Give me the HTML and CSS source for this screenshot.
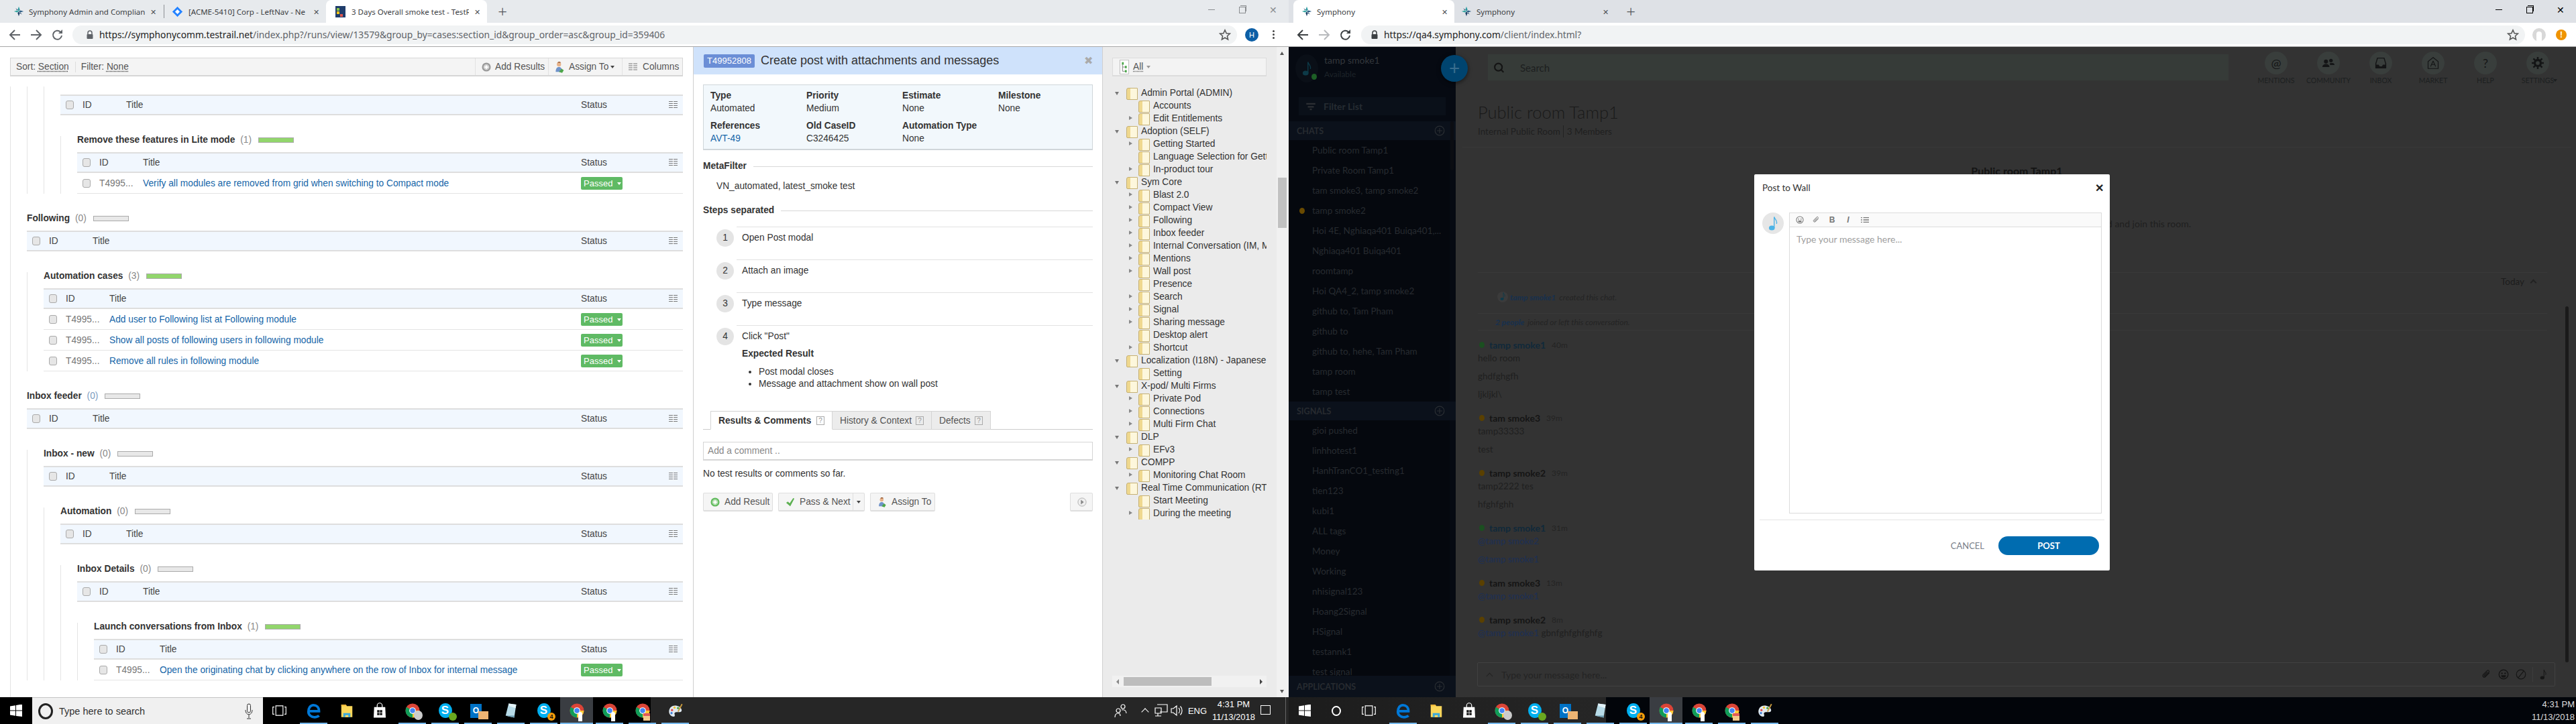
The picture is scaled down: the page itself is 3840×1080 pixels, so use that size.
FILE: index.html
```html
<!DOCTYPE html>
<html lang="en">
<head>
<meta charset="utf-8">
<title>Two browser windows</title>
<link rel="stylesheet" href="styles.css">
</head>
<body>
<svg class="defs" aria-hidden="true">
  <symbol id="logo" viewBox="0 0 20 20"><path d="M10 1l2 6-2 3-2-3z" fill="#2a9aa0"/><path d="M19 10l-6 2-3-2 3-2z" fill="#2d5f86"/><path d="M10 19l-2-6 2-3 2 3z" fill="#1c3f66"/><path d="M1 10l6-2 3 2-3 2z" fill="#34a5a0"/><path d="M4 4l4 3-1 1zM16 16l-4-3 1-1z" fill="#1c3f66"/></symbol>
  <symbol id="back" viewBox="0 0 20 20"><path d="M10 3l-7 7 7 7M3 10h15" fill="none" stroke="currentColor" stroke-width="2"/></symbol>
  <symbol id="fwd" viewBox="0 0 20 20"><path d="M10 3l7 7-7 7M17 10H2" fill="none" stroke="currentColor" stroke-width="2"/></symbol>
  <symbol id="reload" viewBox="0 0 20 20"><path d="M16 11a6.5 6.5 0 1 1-2-5.5" fill="none" stroke="currentColor" stroke-width="2"/><path d="M17 2v6h-6z" fill="currentColor"/></symbol>
  <symbol id="lock" viewBox="0 0 12 14"><path d="M3 6V4a3 3 0 0 1 6 0v2" fill="none" stroke="currentColor" stroke-width="1.5"/><rect x="1.5" y="6" width="9" height="7" rx="1" fill="currentColor"/></symbol>
  <symbol id="star" viewBox="0 0 20 20"><path d="M10 2l2.4 5.4 5.8.6-4.4 3.9 1.3 5.8L10 14.700l-5.100 3 1.300-5.800L1.800 8l5.800-.6z" fill="none" stroke="#555" stroke-width="1.700"/></symbol>
  <symbol id="cols" viewBox="0 0 13 11"><path d="M0 .5h6M7 .5h6M0 3.500h6M7 3.500h6M0 6.500h6M7 6.500h6M0 9.500h6M7 9.500h6" stroke="#777" stroke-width="1" fill="none"/><path d="M6.500 0v11" stroke="#fff"/></symbol>
  <symbol id="user" viewBox="0 0 20 22"><circle cx="9" cy="6" r="4" fill="#e8b48c"/><path d="M6 3a4 4 0 0 1 7 0z" fill="#8a4a20"/><path d="M3 20c0-7 3-9 6-9s6 2 6 9z" fill="#6f93c9"/><path d="M9 20l5-6 4 3-3 5z" fill="#4da64a"/></symbol>
  <symbol id="plusc" viewBox="0 0 16 16"><circle cx="8" cy="8" r="7.500" fill="currentColor"/><circle cx="8" cy="8" r="5" fill="#fff" fill-opacity=".55"/><path d="M8 5v6M5 8h6" stroke="#fff" stroke-width="2"/></symbol>
  <symbol id="chrome" viewBox="0 0 32 32"><circle cx="16" cy="16" r="14" fill="#db4437"/><path d="M16 16L3.900 9A14 14 0 0 0 16 30z" fill="#0f9d58"/><path d="M16 16h14a14 14 0 0 1-14 14z" fill="#fcc934"/><circle cx="16" cy="16" r="6.500" fill="#fff"/><circle cx="16" cy="16" r="5" fill="#4285f4"/></symbol>
  <symbol id="edge" viewBox="0 0 32 32"><path d="M7 17h19c0-8-5-12-11-12C9 5 5 11 5 18c0 7 6 11 12 11 4 0 7-1 9-3" fill="none" stroke="#0078d7" stroke-width="5"/></symbol>
  <symbol id="files" viewBox="0 0 32 32"><path d="M5 4h9l2 3h11v22H5z" fill="#fbd75b"/><path d="M5 4h9l2 3H5z" fill="#f0b93a"/><rect x="9" y="21" width="14" height="8" fill="#39a9dc"/><rect x="13" y="25" width="6" height="4" fill="#fbd75b"/></symbol>
  <symbol id="store" viewBox="0 0 32 32"><path d="M5 9h22l1 21H4z" fill="#fff"/><path d="M11 10V6a5 5 0 0 1 10 0v4" fill="none" stroke="#fff" stroke-width="1.600"/><path d="M11 15h4.500v4.500H11zM16.500 15H21v4.500h-4.500zM11 20.500h4.500V25H11zM16.500 20.500H21V25h-4.500z" fill="#111"/></symbol>
  <symbol id="notes" viewBox="0 0 32 32"><path d="M11 2l15 2-4 26L5 26z" fill="#b7dbe8"/><path d="M11 2l15 2-1 7-13-4z" fill="#e3f2f7"/><path d="M5 26l17 4 1-4z" fill="#6d9cb0"/></symbol>
  <symbol id="palette" viewBox="0 0 32 32"><path d="M15 6C7 6 3 12 3 18s5 10 9 10c3 0 3-3 2-5s1-4 4-4h6c3 0 5-2 4-5-1-5-7-8-13-8z" fill="#dfe8ef"/><circle cx="9" cy="15" r="2.200" fill="#e04b4b"/><circle cx="14" cy="10" r="2.200" fill="#f2c230"/><circle cx="21" cy="11" r="2.200" fill="#4fa64a"/><circle cx="8" cy="21" r="2.200" fill="#3d7ed8"/><path d="M21 18L29 3" stroke="#c79a3f" stroke-width="2.500"/></symbol>
  <symbol id="win" viewBox="0 0 18 18"><path d="M0 2.500L8 1.200V8.500H0zM9 1l9-1.500V8.500H9zM0 9.500h8v7.300L0 15.500zM9 9.500h9V18L9 17z" fill="#fff"/></symbol>
  <symbol id="tview" viewBox="0 0 22 18"><path d="M5 1h12v16H5zM2.500 3H0v12h2.500M19.500 3H22v12h-2.500" fill="none" stroke="#fff" stroke-width="1.300"/></symbol>
  <symbol id="people" viewBox="0 0 20 22"><circle cx="13" cy="5" r="3" fill="none" stroke="#fff" stroke-width="1.200"/><circle cx="6" cy="11" r="3" fill="none" stroke="#fff" stroke-width="1.200"/><path d="M1 21c0-4 2-6 5-6s3 2 3 4M11 10c4-1 7 1 7 5" fill="none" stroke="#fff" stroke-width="1.200"/></symbol>
  <symbol id="net" viewBox="0 0 20 20"><path d="M4 1h15v11H8M1 6h9v8H1zM5 14v4M1 18h9" fill="none" stroke="#fff" stroke-width="1.200"/></symbol>
  <symbol id="sound" viewBox="0 0 20 20"><path d="M2 7h3l5-4v14l-5-4H2zM13 6a6 6 0 0 1 0 8M15.500 3.500a9.500 9.500 0 0 1 0 13" fill="none" stroke="#fff" stroke-width="1.200"/></symbol>
  <symbol id="note" viewBox="0 0 16 26"><ellipse cx="6" cy="21" rx="5" ry="4" fill="currentColor"/><path d="M10 21V2c1 5 6 6 4 12" fill="none" stroke="currentColor" stroke-width="1.600"/></symbol>
  <symbol id="clip" viewBox="0 0 20 20"><path d="M16 7l-8 8a3 3 0 0 1-4-4l8-8a2 2 0 0 1 3 3l-7 7a1 1 0 0 1-1.500-1.500l6-6" fill="none" stroke="currentColor" stroke-width="1.500"/></symbol>
  <symbol id="smile" viewBox="0 0 20 20"><circle cx="10" cy="10" r="8.500" fill="none" stroke="currentColor" stroke-width="1.700"/><circle cx="7" cy="8" r="1.500" fill="currentColor"/><circle cx="13" cy="8" r="1.500" fill="currentColor"/><path d="M5.500 11.500h9a4.500 4.500 0 0 1-9 0z" fill="currentColor"/></symbol>
  <symbol id="listi" viewBox="0 0 20 16"><path d="M6 2.500h14M6 8h14M6 13.500h14M0 2.500h3M0 8h3M0 13.500h3" stroke="currentColor" stroke-width="2.200" fill="none"/></symbol>
  <symbol id="filter" viewBox="0 0 20 16"><path d="M1 1h18v3H1zM4 7h12v3H4zM8 12h4v3H8z" fill="currentColor"/></symbol>
  <symbol id="search" viewBox="0 0 20 20"><circle cx="9" cy="9" r="6.500" fill="none" stroke="currentColor" stroke-width="2.500"/><path d="M13 13l5 5" stroke="currentColor" stroke-width="2.500"/></symbol>
  <symbol id="cplus" viewBox="0 0 20 20"><circle cx="10" cy="10" r="8.500" fill="none" stroke="currentColor" stroke-width="1.500"/><path d="M10 5v10M5 10h10" stroke="currentColor" stroke-width="1.500"/></symbol>
  <symbol id="community" viewBox="0 0 24 20"><circle cx="7" cy="7" r="4" fill="currentColor"/><circle cx="17" cy="5" r="3.500" fill="currentColor"/><path d="M0 18c0-4 3-6 7-6s7 2 7 6zM15 10h5c2 0 4 1 4 4h-9z" fill="currentColor"/></symbol>
  <symbol id="inbox" viewBox="0 0 20 22"><path d="M4 2h12l3 10v8H1v-8z" fill="none" stroke="currentColor" stroke-width="1.800"/><path d="M1 14h5l2 3h4l2-3h5v6H1z" fill="currentColor"/></symbol>
  <symbol id="market" viewBox="0 0 22 24"><path d="M11 1l10 8v14H1V9z" fill="none" stroke="currentColor" stroke-width="1.600"/><path d="M11 8l-5 11M11 8l5 11M8 15h6" stroke="currentColor" stroke-width="1.500" fill="none"/></symbol>
  <symbol id="gear" viewBox="0 0 22 22"><circle cx="11" cy="11" r="5.500" fill="none" stroke="currentColor" stroke-width="4"/><path d="M11 0v5M11 17v5M0 11h5M17 11h5M3 3l4 4M15 15l4 4M19 3l-4 4M3 19l4-4" stroke="currentColor" stroke-width="3"/></symbol>
  <symbol id="nope" viewBox="0 0 20 20"><circle cx="10" cy="10" r="8.500" fill="none" stroke="currentColor" stroke-width="1.500"/><path d="M5 16L15 4" stroke="currentColor" stroke-width="1.500"/></symbol>
  <symbol id="tree" viewBox="0 0 16 24"><rect x=".5" y=".5" width="15" height="23" fill="#fff" stroke="#aaa"/><path d="M4 4h3v4H4zM9 10h3v4H9zM9 17h3v4H9z" fill="#4ba84a"/><path d="M5 8v11h4M5 12h4" stroke="#777" fill="none"/></symbol>
</svg>

<div class="screen">

<!-- LEFT WINDOW -->
<section class="win win-l">
  <div class="browser">
    <div class="tabstrip strip-l">
      <div class="tab"><svg class="favicon"><use href="#logo"/></svg><span class="tab-text">Symphony Admin and Complianc</span><span class="tab-x">✕</span></div>
      <div class="tab tab-sep"><span class="diamond"></span><span class="tab-text">[ACME-5410] Corp - LeftNav - Ne</span><span class="tab-x">✕</span></div>
      <div class="tab tab-on tab-third"><span class="tr-icon"><i></i><i></i><i></i></span><span class="tab-text">3 Days Overall smoke test - TestR</span><span class="tab-x">✕</span></div>
      <span class="newtab">+</span>
      <div class="winctl winctl-dim"><span class="ctl-min"></span><span class="ctl-max"></span><span class="ctl-close">✕</span></div>
    </div>
    <div class="toolbar">
      <svg class="nav-ic ink"><use href="#back"/></svg>
      <svg class="nav-ic ink"><use href="#fwd"/></svg>
      <svg class="nav-ic ink"><use href="#reload"/></svg>
      <div class="omni omni-l"><svg class="lock"><use href="#lock"/></svg><span class="url"><b>https://symphonycomm.testrail.net</b>/index.php?/runs/view/13579&amp;group_by=cases:section_id&amp;group_order=asc&amp;group_id=359406</span><svg class="star"><use href="#star"/></svg></div>
      <span class="slot-avatar"><span class="avatar-h">H</span></span>
      <span class="slot-menu"><span class="dots"><i></i><i></i><i></i></span></span>
    </div>
    <div class="tr-page">
      <!-- runs column -->
      <div class="runs">
        <div class="sortbar">
          <span class="sb-cell">Sort: <u>Section</u></span>
          <span class="sb-cell sb-line">Filter: <u>None</u></span>
          <span class="sb-btn sb-first"><svg class="sb-ic grayc"><use href="#plusc"/></svg>Add Results</span>
          <span class="sb-btn sb-assign"><svg class="sb-ic2"><use href="#user"/></svg>Assign To <i class="caret"></i></span>
          <span class="sb-btn sb-cols"><svg class="sb-ic3"><use href="#cols"/></svg>Columns</span>
        </div>
        <div class="grp grp-root">
          <div class="grp">
            <div class="grp grp-inner">
              <div class="thead"><span class="chk"></span><span>ID</span><span>Title</span><span>Status</span><svg class="colic"><use href="#cols"/></svg></div>
              <div class="grp grp-gap">
                <h3 class="sec">Remove these features in Lite mode <em>(1)</em><span class="bar bar-g"></span></h3>
                <div class="thead"><span class="chk"></span><span>ID</span><span>Title</span><span>Status</span><svg class="colic"><use href="#cols"/></svg></div>
                <div class="trow"><span class="chk"></span><span class="tid">T4995...</span><a class="tlink">Verify all modules are removed from grid when switching to Compact mode</a><span class="passed">Passed <i class="caret caret-w"></i></span></div>
              </div>
            </div>
          </div>
          <h3 class="sec sec-gap">Following <em>(0)</em><span class="bar"></span></h3>
          <div class="thead"><span class="chk"></span><span>ID</span><span>Title</span><span>Status</span><svg class="colic"><use href="#cols"/></svg></div>
          <div class="grp grp-gap">
            <h3 class="sec">Automation cases <em>(3)</em><span class="bar bar-g"></span></h3>
            <div class="thead"><span class="chk"></span><span>ID</span><span>Title</span><span>Status</span><svg class="colic"><use href="#cols"/></svg></div>
            <div class="trow"><span class="chk"></span><span class="tid">T4995...</span><a class="tlink">Add user to Following list at Following module</a><span class="passed">Passed <i class="caret caret-w"></i></span></div>
            <div class="trow"><span class="chk"></span><span class="tid">T4995...</span><a class="tlink">Show all posts of following users in following module</a><span class="passed">Passed <i class="caret caret-w"></i></span></div>
            <div class="trow"><span class="chk"></span><span class="tid">T4995...</span><a class="tlink">Remove all rules in following module</a><span class="passed">Passed <i class="caret caret-w"></i></span></div>
          </div>
          <h3 class="sec sec-gap">Inbox feeder <em class="blue">(0)</em><span class="bar"></span></h3>
          <div class="thead"><span class="chk"></span><span>ID</span><span>Title</span><span>Status</span><svg class="colic"><use href="#cols"/></svg></div>
          <div class="grp grp-gap">
            <h3 class="sec">Inbox - new <em>(0)</em><span class="bar"></span></h3>
            <div class="thead"><span class="chk"></span><span>ID</span><span>Title</span><span>Status</span><svg class="colic"><use href="#cols"/></svg></div>
            <div class="grp grp-gap">
              <h3 class="sec">Automation <em>(0)</em><span class="bar"></span></h3>
              <div class="thead"><span class="chk"></span><span>ID</span><span>Title</span><span>Status</span><svg class="colic"><use href="#cols"/></svg></div>
              <div class="grp grp-gap">
                <h3 class="sec">Inbox Details <em>(0)</em><span class="bar"></span></h3>
                <div class="thead"><span class="chk"></span><span>ID</span><span>Title</span><span>Status</span><svg class="colic"><use href="#cols"/></svg></div>
                <div class="grp grp-gap">
                  <h3 class="sec">Launch conversations from Inbox <em>(1)</em><span class="bar bar-g"></span></h3>
                  <div class="thead"><span class="chk"></span><span>ID</span><span>Title</span><span>Status</span><svg class="colic"><use href="#cols"/></svg></div>
                  <div class="trow"><span class="chk"></span><span class="tid">T4995...</span><a class="tlink">Open the originating chat by clicking anywhere on the row of Inbox for internal message</a><span class="passed">Passed <i class="caret caret-w"></i></span></div>
                </div>
              </div>
            </div>
          </div>
        </div>
      </div>

      <!-- case panel -->
      <div class="case">
        <div class="case-head"><span class="badge">T49952808</span><span class="case-title">Create post with attachments and messages</span><span class="case-x">✖</span></div>
        <div class="case-body">
          <div class="info">
            <div><b>Type</b><span>Automated</span></div>
            <div><b>Priority</b><span>Medium</span></div>
            <div><b>Estimate</b><span>None</span></div>
            <div><b>Milestone</b><span>None</span></div>
            <div><b>References</b><a class="tlink">AVT-49</a></div>
            <div><b>Old CaseID</b><span>C3246425</span></div>
            <div><b>Automation Type</b><span>None</span></div>
          </div>
          <h4 class="rule rule-meta">MetaFilter</h4>
          <p class="meta-val">VN_automated, latest_smoke test</p>
          <h4 class="rule rule-steps">Steps separated</h4>
          <div class="step"><span class="num">1</span><div class="step-b">Open Post modal</div></div>
          <div class="step"><span class="num">2</span><div class="step-b">Attach an image</div></div>
          <div class="step"><span class="num">3</span><div class="step-b">Type message</div></div>
          <div class="step"><span class="num">4</span><div class="step-b">Click "Post"<strong class="exp">Expected Result</strong>
            <ul class="bullets"><li>Post modal closes</li><li>Message and attachment show on wall post</li></ul></div></div>
          <div class="ctabs">
            <span class="ctab ctab-on ctab-a">Results &amp; Comments <i class="q">?</i></span>
            <span class="ctab ctab-b">History &amp; Context <i class="q">?</i></span>
            <span class="ctab ctab-c">Defects <i class="q">?</i></span>
          </div>
          <div class="comment">Add a comment ..</div>
          <p class="nores">No test results or comments so far.</p>
          <div class="actions">
            <span class="btn btn-add"><svg class="btn-ic greenc"><use href="#plusc"/></svg>Add Result</span>
            <span class="btn btn-pass"><svg class="btn-ic" viewBox="0 0 16 16"><path d="M1 9l3-2 3 3 6-9 2 1-7 13z" fill="#5cb050"/></svg>Pass &amp; Next<i class="btn-split"><i class="caret"></i></i></span>
            <span class="btn btn-assign"><svg class="btn-ic"><use href="#user"/></svg>Assign To</span>
            <span class="btn btn-next"><svg class="btn-ic grayc" viewBox="0 0 16 16"><circle cx="8" cy="8" r="7" fill="#eee" stroke="#aaa"/><path d="M6 4l5 4-5 4z" fill="#888"/></svg></span>
          </div>
        </div>
      </div>

      <!-- tree column -->
      <div class="side">
        <div class="all"><svg class="all-ic"><use href="#tree"/></svg><u>All</u><i class="caret caret-g"></i></div>
        <ul class="tree">
          <li class="p o">Admin Portal (ADMIN)</li>
          <li class="c">Accounts</li>
          <li class="c a">Edit Entitlements</li>
          <li class="p o">Adoption (SELF)</li>
          <li class="c a">Getting Started</li>
          <li class="c">Language Selection for Getting Started</li>
          <li class="c a">In-product tour</li>
          <li class="p o">Sym Core</li>
          <li class="c a">Blast 2.0</li>
          <li class="c a">Compact View</li>
          <li class="c a">Following</li>
          <li class="c a">Inbox feeder</li>
          <li class="c a">Internal Conversation (IM, MIM)</li>
          <li class="c a">Mentions</li>
          <li class="c a">Wall post</li>
          <li class="c">Presence</li>
          <li class="c a">Search</li>
          <li class="c a">Signal</li>
          <li class="c a">Sharing message</li>
          <li class="c">Desktop alert</li>
          <li class="c a">Shortcut</li>
          <li class="p o">Localization (I18N) - Japanese</li>
          <li class="c">Setting</li>
          <li class="p o">X-pod/ Multi Firms</li>
          <li class="c a">Private Pod</li>
          <li class="c a">Connections</li>
          <li class="c a">Multi Firm Chat</li>
          <li class="p o">DLP</li>
          <li class="c a">EFv3</li>
          <li class="p o">COMPP</li>
          <li class="c a">Monitoring Chat Room</li>
          <li class="p o">Real Time Communication (RTC)</li>
          <li class="c">Start Meeting</li>
          <li class="c a">During the meeting</li>
        </ul>
        <div class="hscroll"><i class="h-l"></i><i class="h-thumb"></i><i class="h-r"></i></div>
      </div>
      <div class="vscroll"><i class="v-up"></i><i class="v-thumb"></i><i class="v-down"></i></div>
    </div>
  </div>
  <footer class="taskbar task-l">
    <span class="tb-start"><svg class="tb-win"><use href="#win"/></svg></span>
    <div class="tb-search"><span class="cortana"></span><span class="tb-stext">Type here to search</span><svg class="tb-mic" viewBox="0 0 12 24"><rect x="3.500" y="1" width="5" height="13" rx="2.500" fill="none" stroke="#333"/><path d="M1 10c0 9 10 9 10 0M6 17v5M3 23h6" fill="none" stroke="#333"/></svg></div>
    <span class="tb-view"><svg class="tb-tv"><use href="#tview"/></svg></span>
    <span class="gap3"></span>
    <span class="app run"><svg class="ai"><use href="#edge"/></svg></span>
    <span class="app"><svg class="ai"><use href="#files"/></svg></span>
    <span class="app"><svg class="ai"><use href="#store"/></svg></span>
    <span class="app run"><svg class="ai"><use href="#chrome"/></svg><i class="b-user"></i></span>
    <span class="app run"><span class="skype">S</span><i class="b-green"></i></span>
    <span class="app run"><span class="outlook">O</span><i class="b-mail"></i></span>
    <span class="app run"><svg class="ai"><use href="#notes"/></svg></span>
    <span class="app run"><span class="skype">S</span><i class="b-orange">4</i></span>
    <span class="app run app-on"><svg class="ai"><use href="#chrome"/></svg><i class="b-fig"></i></span>
    <span class="app run"><svg class="ai"><use href="#chrome"/></svg><i class="b-fig"></i></span>
    <span class="app run"><svg class="ai"><use href="#chrome"/></svg><i class="b-cake"></i></span>
    <span class="app run"><svg class="ai"><use href="#palette"/></svg></span>
    <div class="tray">
      <svg class="tr tr-people"><use href="#people"/></svg>
      <span class="tr-chev"></span>
      <svg class="tr"><use href="#net"/></svg>
      <svg class="tr tr-sound"><use href="#sound"/></svg>
      <span class="tr-eng">ENG</span>
      <span class="clock"><span>4:31 PM</span><span>11/13/2018</span></span>
      <span class="notif"></span>
      <span class="showdesk"></span>
    </div>
  </footer>
</section>

<!-- RIGHT WINDOW -->
<section class="win win-r">
  <div class="browser">
    <div class="tabstrip strip-r">
      <div class="tab tab-on tab-sym"><svg class="favicon"><use href="#logo"/></svg><span class="tab-text">Symphony</span><span class="tab-x">✕</span></div>
      <div class="tab tab-sym tab-sym2"><svg class="favicon"><use href="#logo"/></svg><span class="tab-text">Symphony</span><span class="tab-x">✕</span></div>
      <span class="newtab">+</span>
      <div class="winctl"><span class="ctl-min"></span><span class="ctl-max"></span><span class="ctl-close">✕</span></div>
    </div>
    <div class="toolbar toolbar-r">
      <svg class="nav-ic ink"><use href="#back"/></svg>
      <svg class="nav-ic nav-off"><use href="#fwd"/></svg>
      <svg class="nav-ic ink"><use href="#reload"/></svg>
      <div class="omni omni-r"><svg class="lock"><use href="#lock"/></svg><span class="url"><b>https://qa4.symphony.com</b>/client/index.html?</span><svg class="star"><use href="#star"/></svg></div>
      <span class="slot-avatar slot-a2"><span class="avatar-o"><i></i></span></span>
      <span class="slot-menu slot-m2"><span class="warn">!</span></span>
    </div>
    <div class="sym">
      <aside class="snav">
        <div class="profile">
          <span class="p-av"><svg class="p-note"><use href="#note"/></svg><i class="p-dot"></i></span>
          <div class="p-txt"><strong>tamp smoke1</strong><span>Available</span></div>
        </div>
        <div class="filter"><svg class="f-ic"><use href="#filter"/></svg>Filter List</div>
        <div class="shead">CHATS<svg class="s-plus"><use href="#cplus"/></svg></div>
        <ul class="slist">
          <li>Public room Tamp1</li>
          <li>Private Room Tamp1</li>
          <li>tam smoke3, tamp smoke2</li>
          <li class="away">tamp smoke2</li>
          <li>Hoi 4E, Nghiaqa401 Buiqa401,...</li>
          <li>Nghiaqa401 Buiqa401</li>
          <li>roomtamp</li>
          <li>Hoi QA4_2, tamp smoke2</li>
          <li>github to, Tam Pham</li>
          <li>github to</li>
          <li>github to, hehe, Tam Pham</li>
          <li>tamp room</li>
          <li>tamp test</li>
        </ul>
        <div class="shead">SIGNALS<svg class="s-plus"><use href="#cplus"/></svg></div>
        <ul class="slist slist-grow">
          <li>gioi pushed</li>
          <li>linhhotest1</li>
          <li>HanhTranCO1_testing1</li>
          <li>tien123</li>
          <li>kubi1</li>
          <li>ALL tags</li>
          <li>Money</li>
          <li>Working</li>
          <li>nhisignal123</li>
          <li>Hoang2Signal</li>
          <li>HSignal</li>
          <li>testannk1</li>
          <li>test signal</li>
        </ul>
        <div class="shead shead-app">APPLICATIONS<svg class="s-plus"><use href="#cplus"/></svg></div>
      </aside>
      <main class="smain">
        <div class="stop">
          <div class="ssearch"><svg class="ss-ic"><use href="#search"/></svg>Search</div>
          <div class="snavs">
            <div class="sn"><span class="sn-c sn-at">@</span>MENTIONS</div>
            <div class="sn"><span class="sn-c"><svg class="sn-i"><use href="#community"/></svg></span>COMMUNITY</div>
            <div class="sn"><span class="sn-c"><svg class="sn-i"><use href="#inbox"/></svg></span>INBOX</div>
            <div class="sn"><span class="sn-c"><svg class="sn-i"><use href="#market"/></svg></span>MARKET</div>
            <div class="sn"><span class="sn-c sn-at">?</span>HELP</div>
            <div class="sn sn-set"><span class="sn-c"><svg class="sn-i"><use href="#gear"/></svg></span>SETTINGS</div>
          </div>
        </div>
        <header class="rhead">
          <h1>Public room Tamp1</h1>
          <p>Internal Public Room <i></i> 3 Members</p>
        </header>
        <div class="rabout">
          <h2>Public room Tamp1</h2>
          <p>find and join this room.</p>
        </div>
        <div class="tline">
          <div class="tl-a">
            <span class="tl-today">Today <i></i></span>
            <div class="tl-created"><span class="tl-av"><svg class="tl-note"><use href="#note"/></svg></span><em class="who">tamp smoke1</em><em>created this chat.</em></div>
          </div>
          <div class="tl-b"><em class="who">2 people</em><em>joined or left this conversation.</em></div>
          <article class="msg msg-first"><div class="mh"><i class="dot on"></i><b class="me">tamp smoke1</b><time>40m</time></div><p>hello room</p><p class="m2">ghdfghgfh</p><p class="m2">ljkljkl\</p></article>
          <article class="msg"><div class="mh"><i class="dot aw"></i><b>tam smoke3</b><time>39m</time></div><p>tamp33333</p><p class="m2">test</p></article>
          <article class="msg"><div class="mh"><i class="dot aw"></i><b>tamp smoke2</b><time>39m</time></div><p>tamp2222 tes</p><p class="m2">hfghfghh</p></article>
          <article class="msg"><div class="mh"><i class="dot on"></i><b class="me">tamp smoke1</b><time>31m</time></div><p class="at">@tamp smoke2</p><p class="m2 at">@tamp smoke1</p></article>
          <article class="msg"><div class="mh"><i class="dot aw"></i><b>tam smoke3</b><time>13m</time></div><p class="at">@tamp smoke1</p></article>
          <article class="msg"><div class="mh"><i class="dot aw"></i><b>tamp smoke2</b><time>8m</time></div><p><span class="at">@tamp smoke1</span> gbnfghfghfghfg</p></article>
        </div>
        <div class="sinput">
          <i class="si-up"></i><span class="si-t">Type your message here...</span>
          <svg class="si-i"><use href="#clip"/></svg><svg class="si-i"><use href="#smile"/></svg><svg class="si-i"><use href="#nope"/></svg><i class="si-sep"></i><svg class="si-n"><use href="#note"/></svg>
        </div>
      </main>
      <span class="fab">+</span>
      <i class="nav-thumb"></i>
      <i class="main-thumb"></i>
      <div class="modal">
        <div class="m-head"><span>Post to Wall</span><span class="m-x">✕</span></div>
        <div class="m-body">
          <span class="m-av"><svg class="m-note"><use href="#note"/></svg></span>
          <div class="editor">
            <div class="e-tools">
              <svg class="e-i"><use href="#smile"/></svg>
              <svg class="e-i"><use href="#clip"/></svg>
              <b class="e-t">B</b>
              <i class="e-t">I</i>
              <svg class="e-i e-l"><use href="#listi"/></svg>
            </div>
            <div class="e-ph">Type your message here...</div>
          </div>
        </div>
        <div class="m-foot"><span class="m-cancel">CANCEL</span><span class="m-post">POST</span></div>
      </div>
    </div>
  </div>
  <footer class="taskbar task-r">
    <span class="tb-start tb-s2"><svg class="tb-win"><use href="#win"/></svg></span>
    <span class="tb-slot"><span class="cortana cortana-w"></span></span>
    <span class="tb-slot"><svg class="tb-tv"><use href="#tview"/></svg></span>
    <span class="gap3"></span>
    <span class="app run"><svg class="ai"><use href="#edge"/></svg></span>
    <span class="app"><svg class="ai"><use href="#files"/></svg></span>
    <span class="app"><svg class="ai"><use href="#store"/></svg></span>
    <span class="app run"><svg class="ai"><use href="#chrome"/></svg><i class="b-user"></i></span>
    <span class="app run"><span class="skype">S</span><i class="b-green"></i></span>
    <span class="app run"><span class="outlook">O</span><i class="b-mail"></i></span>
    <span class="app run"><svg class="ai"><use href="#notes"/></svg></span>
    <span class="app run"><span class="skype">S</span><i class="b-orange">4</i></span>
    <span class="app run app-on"><svg class="ai"><use href="#chrome"/></svg><i class="b-fig"></i></span>
    <span class="app run"><svg class="ai"><use href="#chrome"/></svg><i class="b-fig"></i></span>
    <span class="app run"><svg class="ai"><use href="#chrome"/></svg><i class="b-cake"></i></span>
    <span class="app run"><svg class="ai"><use href="#palette"/></svg></span>
    <span class="clock clock-r"><span>4:31 PM</span><span>11/13/2018</span></span>
  </footer>
</section>
</div>
</body>
</html>
```
FILE: styles.css
```css
* { box-sizing: border-box; }
html, body { margin: 0; padding: 0; }
body { width: 3840px; height: 1080px; overflow: hidden; font-family: "Liberation Sans", Arial, sans-serif; font-size: 13.750px; color: #333; background: #000; }
.defs { position: absolute; width: 0; height: 0; }
i, em { font-style: normal; }
h1, h2, h3, h4, p, ul { margin: 0; padding: 0; font-weight: normal; }
ul { list-style: none; }
.screen { display: flex; width: 3840px; height: 1080px; }
.win { display: flex; flex-direction: column; height: 1080px; position: relative; }
.win-l { width: 1921px; }
.win-r { width: 1919px; }
.browser { height: 1040px; display: flex; flex-direction: column; overflow: hidden; }

/* chrome */
.tabstrip { display: flex; height: 34px; font-family: "Noto Sans", sans-serif; font-size: 11.500px; color: #3c4043; flex: none; }
.strip-l { background: #e7eaed; }
.strip-r { background: #dee1e6; padding-left: 7px; }
.tab { width: 243px; height: 34px; display: flex; align-items: center; padding: 0 8px 0 20px; position: relative; }
.tab-sep { width: 243px; padding-left: 16px; }
.tab-sep::before { content: ""; position: absolute; left: 1px; top: 7px; height: 20px; width: 1px; background: #8d9094; }
.tab-on { background: #fff; border-radius: 8px 8px 0 0; }
.tab-third { width: 240px; padding-left: 14px; }
.tab-sym { width: 240px; padding-left: 12px; }
.tab-sym2 { padding-left: 10px; }
.favicon { width: 16px; height: 18px; margin-right: 7px; flex: none; }
.diamond { width: 11px; height: 11px; transform: rotate(45deg); background: #2684ff; margin-right: 11px; flex: none; box-shadow: inset 0 0 0 3px #2684ff, inset 0 0 0 9px #fff; }
.tr-icon { width: 15px; height: 17px; background: #1f3d6b; margin-right: 9px; position: relative; flex: none; }
.tr-icon i { position: absolute; width: 4px; height: 4px; left: 2px; background: #8bc34a; }
.tr-icon i:nth-child(1) { top: 3px; }
.tr-icon i:nth-child(2) { top: 8px; background: #f5c518; }
.tr-icon i:nth-child(3) { top: 12px; left: 7px; background: #e0574f; }
.tab-text { flex: 1; white-space: nowrap; overflow: hidden; }
.tab-x { width: 14px; text-align: center; font-size: 11px; color: #4b4f54; flex: none; margin-left: 5px; }
.newtab { font-size: 24px; line-height: 33px; color: #54585c; font-weight: 300; margin-left: 13px; width: 20px; text-align: center; }
.winctl { margin-left: auto; display: flex; width: 138px; height: 28px; color: #000; }
.winctl span { width: 46px; display: flex; align-items: center; justify-content: center; position: relative; }
.winctl-dim { color: #8a8d90; }
.ctl-min::before { content: ""; width: 10px; height: 1px; background: currentColor; }
.ctl-max::before { content: ""; width: 8px; height: 8px; border: 1px solid currentColor; margin-top: 2px; }
.ctl-max::after { content: ""; position: absolute; width: 8px; height: 8px; border: 1px solid currentColor; border-left: 0; border-bottom: 0; margin: -3px 0 0 3px; }
.ctl-close { font-size: 14px; font-weight: 300; }

.toolbar { height: 36px; background: #fff; border-bottom: 1px solid #a8a8a8; display: flex; align-items: center; padding-left: 6px; flex: none; }
.toolbar-r { padding-left: 5px; }
.nav-ic { width: 32px; height: 20px; flex: none; }
.ink { color: #5f6368; }
.toolbar-r .ink { color: #3c4043; }
.nav-off { color: #b8babd; }
.omni { flex: 1; height: 28px; margin-left: 6px; border-radius: 14px; background: #f1f3f4; display: flex; align-items: center; padding-left: 20px; font-family: "Noto Sans", sans-serif; font-size: 13.800px; color: #5f6368; min-width: 0; }
.omni-r { margin-left: 7px; padding-left: 14px; }
.lock { width: 12px; height: 14px; color: #5f6368; margin-right: 8px; flex: none; }
.toolbar-r .lock { color: #3c4043; }
.url { white-space: nowrap; flex: 1; }
.url b { font-weight: normal; color: #222; }
.star { width: 18px; height: 18px; margin-right: 9px; flex: none; }
.slot-avatar { width: 44px; display: flex; justify-content: center; flex: none; }
.slot-a2 { width: 42px; }
.slot-menu { width: 20px; display: flex; justify-content: center; margin-right: 13px; flex: none; }
.slot-m2 { width: 24px; margin-right: 10px; }
.avatar-h { width: 20px; height: 20px; border-radius: 50%; background: #0d5fa6; color: #fff; font-size: 11px; text-align: center; line-height: 20px; }
.dots i { display: block; width: 3px; height: 3px; border-radius: 50%; background: #444; margin: 2px 0; }
.avatar-o { width: 20px; height: 20px; border-radius: 50%; background: #d8d8d8; display: flex; justify-content: center; align-items: flex-end; }
.avatar-o i { width: 8px; height: 15px; background: #fff; border-radius: 4px 4px 0 0; }
.warn { width: 16px; height: 16px; border-radius: 50%; background: #ef9300; color: #fff; font-weight: bold; font-size: 12px; line-height: 16px; text-align: center; }

/* TestRail */
.tr-page { flex: 1; display: flex; min-height: 0; background: #fff; }
.runs { width: 1033px; flex: none; padding: 16px 15px 0; overflow: hidden; }
.sortbar { height: 28px; display: flex; align-items: center; background: #f4f4f4; border: 1px solid #d6d6d6; border-bottom-width: 2px; margin-bottom: 15px; color: #555; }
.sb-cell { padding: 0 9px 0 8px; line-height: 16px; }
.sb-cell u { text-decoration: underline dotted #333; text-underline-offset: 2px; }
.sb-line { border-left: 1px solid #ddd; padding-left: 8px; }
.sb-btn { display: flex; align-items: center; height: 100%; border-left: 1px solid #e2e2e2; white-space: nowrap; }
.sb-first { margin-left: auto; width: 109px; padding-left: 9px; }
.sb-assign { width: 110px; padding-left: 8px; }
.sb-cols { width: 90px; padding-left: 9px; }
.sb-ic { width: 14px; height: 14px; margin-right: 6px; }
.sb-ic2 { width: 16px; height: 18px; margin-right: 6px; }
.sb-ic3 { width: 13px; height: 12px; margin-right: 8px; }
.grayc { color: #999; }
.greenc { color: #62bb5e; }
.caret { display: inline-block; width: 0; height: 0; border: 3.500px solid transparent; border-top: 4px solid #444; border-bottom: 0; vertical-align: middle; margin-left: 3px; }
.caret-w { border-top-color: #fff; }
.caret-g { border-top-color: #999; margin-left: 5px; }

.grp { border-left: 1px solid #e4e4e4; padding-left: 24px; }
.grp-root { height: 911px; }
.grp-inner { padding-top: 12px; }
.grp-gap { margin-top: 31px; }
.sec { height: 11px; display: flex; align-items: center; font-weight: bold; font-size: 13.750px; color: #333; margin-bottom: 13px; white-space: pre; }
.sec em { font-weight: normal; color: #888; margin-left: 4px; }
.sec em.blue { color: #7d9cc0; }
.sec-gap { margin-top: 31px; }
.bar { width: 53px; height: 8px; margin-left: 10px; background: #e8e8e8; border: 1px solid #aaa; }
.bar-g { background: #92d66c; }
.thead, .trow { display: grid; grid-template-columns: 33px 65px 1fr 131px 13px; align-items: center; height: 31px; padding-right: 8px; }
.thead { background: #f1f7fe; border-top: 2px solid #dedede; border-bottom: 2px solid #dedede; color: #444; }
.trow { border-bottom: 1px solid #e4e4e4; grid-template-columns: 33px 65px 1fr 144px; padding-right: 8px; }
.chk { width: 12px; height: 13px; margin-left: 8px; background: #e6e6e6; border: 1px solid #aaa; border-radius: 3px; }
.colic { width: 13px; height: 11px; }
.tid { color: #777; }
.tlink { color: #1565a8; white-space: nowrap; }
.passed { width: 62px; height: 19px; background: #5fba64; border-radius: 2px; color: #fff; font-size: 13px; line-height: 19px; padding-left: 4px; white-space: nowrap; }

.case { width: 611px; flex: none; border-left: 1px solid #cfcfcf; border-right: 1px solid #d0d0d0; }
.case-head { height: 41px; background: #cfe2fb; display: flex; align-items: center; padding-left: 15px; }
.badge { width: 76px; height: 20px; background: #6b8ed6; border-radius: 2px; color: #fff; font-size: 13px; line-height: 20px; text-align: center; }
.case-title { font-size: 18px; margin-left: 9px; color: #333; }
.case-x { margin-left: auto; margin-right: 14px; color: #aaa; font-size: 16px; }
.case-body { padding: 15px 14px 0; }
.info { display: grid; grid-template-columns: repeat(4, 143px); row-gap: 7px; height: 98px; padding: 6px 0 7px 10px; background: #f2f8fc; border: 1px solid #d0d6da; border-bottom-width: 2px; }
.info div { display: flex; flex-direction: column; line-height: 19px; white-space: nowrap; }
.info b { color: #333; }
.rule { display: flex; align-items: center; font-weight: bold; line-height: 20px; white-space: nowrap; }
.rule::after { content: ""; flex: 1; height: 1px; background: #d8d8d8; margin-left: 10px; }
.rule-meta { margin-top: 14px; }
.meta-val { margin: 10px 0 16px 20px; line-height: 20px; }
.rule-steps { margin-bottom: 14px; }
.step { display: flex; padding-left: 20px; }
.num { width: 26px; height: 26px; margin: 4px 4px 0 0; border-radius: 50%; background: #e4e4e4; text-align: center; line-height: 26px; flex: none; }
.step-b { flex: 1; min-height: 49px; border-top: 1px solid #e2e2e2; padding: 6px 0 0 8px; line-height: 20px; }
.exp { display: block; margin-top: 6px; }
.bullets { list-style: disc; margin: 8px 0 0; padding-left: 25px; line-height: 18px; }
.ctabs { display: flex; height: 28px; margin-top: 31px; padding-left: 11px; border-bottom: 1px solid #ccc; }
.ctab { display: flex; align-items: center; justify-content: space-between; height: 28px; padding: 0 11px; background: #ececec; border: 1px solid #d4d4d4; border-left: 0; color: #555; white-space: nowrap; }
.ctab-on { background: #fff; border-left: 1px solid #d4d4d4; border-bottom-color: #fff; font-weight: bold; color: #333; }
.ctab-a { width: 182px; }
.ctab-b { width: 148px; }
.ctab-c { width: 88px; }
.q { width: 12px; height: 13px; border: 1px solid #aaa; color: #999; font-size: 10px; line-height: 11px; text-align: center; font-weight: normal; margin-left: 6px; }
.comment { height: 28px; margin-top: 18px; border: 1px solid #d5d5d5; border-bottom-width: 2px; padding-left: 6px; line-height: 26px; color: #888; }
.nores { margin-top: 10px; line-height: 20px; }
.actions { display: flex; margin-top: 18px; }
.btn { height: 28px; display: flex; align-items: center; background: #f5f5f5; border: 1px solid #dedede; border-bottom-width: 2px; border-radius: 2px; color: #555; padding-left: 10px; white-space: nowrap; }
.btn-ic { width: 14px; height: 16px; margin-right: 7px; flex: none; }
.btn-add { width: 104px; }
.btn-pass { width: 129px; margin-left: 8px; padding-right: 0; }
.btn-split { margin-left: auto; width: 17px; height: 100%; border-left: 1px solid #dedede; display: flex; align-items: center; justify-content: center; }
.btn-split .caret { margin-left: 0; }
.btn-assign { width: 97px; margin-left: 8px; }
.btn-next { width: 34px; margin-left: auto; }

.side { width: 259px; flex: none; background: #ebebeb; padding: 16px 15px 0 14px; position: relative; }
.all { height: 28px; width: 230px; background: #f3f3f3; border: 1px solid #dcdcdc; border-bottom-width: 2px; display: flex; align-items: center; padding-left: 9px; color: #555; }
.all-ic { width: 16px; height: 24px; transform: scale(.9); margin-right: 5px; }
.all u { text-decoration: underline dotted #555; text-underline-offset: 2px; }
.tree { width: 230px; overflow: hidden; margin-top: 15px; }
.tree li { height: 19px; line-height: 19px; white-space: nowrap; position: relative; color: #333; }
.tree .p { padding-left: 43px; }
.tree .c { padding-left: 61px; }
.tree li::before { content: ""; position: absolute; top: 2px; width: 15px; height: 16px; background: linear-gradient(90deg, #efd88f 0 35%, #fdf7dc 35% 100%); border: 1px solid #c5b073; border-radius: 3px 1px 0 2px; }
.tree .p::before { left: 21px; }
.tree .c::before { left: 39px; }
.tree li::after { content: ""; position: absolute; }
.tree .o::after { left: 4px; top: 8px; border: 3.500px solid transparent; border-top: 5px solid #777; border-bottom: 0; }
.tree .a::after { left: 25px; top: 6px; border: 3.500px solid transparent; border-left: 5px solid #888; border-right: 0; }
.hscroll { position: absolute; left: 14px; top: 938px; width: 230px; height: 17px; background: #f1f1f1; display: flex; align-items: center; }
.h-l { width: 0; height: 0; border: 4px solid transparent; border-right: 4px solid #888; border-left: 0; margin-left: 6px; }
.h-thumb { width: 131px; height: 13px; background: #bdbdbd; margin-left: 7px; }
.h-r { width: 0; height: 0; border: 4px solid transparent; border-left: 4px solid #444; border-right: 0; margin-left: auto; margin-right: 6px; }
.vscroll { flex: 1; background: #f1f1f1; position: relative; }
.v-up, .v-down { position: absolute; left: 5px; width: 0; height: 0; border: 3.500px solid transparent; }
.v-up { top: 7px; border-bottom: 5px solid #555; border-top: 0; }
.v-down { bottom: 6px; border-top: 5px solid #555; border-bottom: 0; }
.v-thumb { position: absolute; left: 2px; top: 195px; width: 13px; height: 75px; background: #c1c1c1; }

/* taskbar */
.taskbar { height: 40px; display: flex; align-items: center; flex: none; color: #fff; }
.task-l { background: linear-gradient(90deg, #000 970px, #262626 970px); }
.task-r { background: linear-gradient(90deg, #1c1c1c 0, #262626 473px, #02050a 473px); }
.tb-start { width: 48px; display: flex; justify-content: center; }
.tb-s2 { width: 47px; }
.tb-win { width: 18px; height: 18px; }
.tb-search { width: 344px; height: 40px; background: #f0f0f0; border-top: 1px solid #c4c4c4; display: flex; align-items: center; color: #333; font-size: 14px; padding-left: 9px; }
.cortana { width: 22px; height: 24px; border: 3px solid #222; border-radius: 50%; flex: none; }
.cortana-w { border-color: #fff; width: 14px; height: 15px; border-width: 2px; }
.tb-stext { margin-left: 9px; flex: 1; font-size: 14.500px; }
.tb-mic { width: 12px; height: 24px; margin-right: 15px; }
.tb-view { width: 48px; display: flex; justify-content: center; }
.tb-slot { width: 48px; display: flex; justify-content: center; align-items: center; height: 40px; }
.tb-tv { width: 21px; height: 16px; }
.gap3 { width: 3px; }
.app { width: 49px; height: 40px; display: flex; align-items: center; justify-content: center; position: relative; flex: none; }
.run::after { content: ""; position: absolute; left: 4px; right: 4px; bottom: 0; height: 2px; background: #76b9ed; }
.app-on { background: #3a3d42; }
.app-on::after { left: 0; right: 0; }
.ai { width: 24px; height: 24px; }
.skype { width: 20px; height: 22px; border-radius: 50%; background: #00aff0; color: #fff; text-align: center; line-height: 22px; font-size: 17px; font-weight: bold; }
.outlook { width: 17px; height: 21px; background: #0072c6; color: #fff; font-size: 12px; font-weight: bold; line-height: 21px; text-align: center; margin-right: 6px; }
.b-user, .b-green, .b-orange, .b-mail, .b-fig, .b-cake { position: absolute; }
.b-user { left: 27px; top: 20px; width: 13px; height: 14px; border-radius: 50%; background: #ccc; }
.b-green { left: 30px; top: 23px; width: 12px; height: 12px; border-radius: 50%; background: #6aa820; }
.b-orange { left: 30px; top: 23px; width: 12px; height: 12px; border-radius: 50%; background: #f59c0a; color: #111; font-size: 9px; line-height: 12px; text-align: center; font-weight: bold; }
.b-mail { left: 25px; top: 21px; width: 15px; height: 12px; background: #edb473; }
.b-fig { left: 27px; top: 22px; width: 6px; height: 14px; background: #fff; border-radius: 3px 3px 0 0; }
.b-cake { left: 26px; top: 24px; width: 10px; height: 11px; background: #f3c98a; border-top: 4px solid #e05a5a; }
.tray { margin-left: auto; display: flex; align-items: center; height: 40px; }
.tr { width: 24px; height: 20px; flex: none; }
.tr-people { margin-right: 12px; width: 24px; height: 22px; }
.tr-sound { width: 22px; }
.tr-chev { width: 24px; height: 20px; position: relative; }
.tr-chev::before { content: ""; position: absolute; left: 8px; top: 8px; width: 7px; height: 7px; border-left: 1px solid #fff; border-top: 1px solid #fff; transform: rotate(45deg); }
.tr-eng { width: 40px; text-align: center; font-size: 13px; }
.clock { width: 68px; display: flex; flex-direction: column; align-items: center; font-size: 13px; line-height: 19px; white-space: nowrap; }
.clock-r { margin-left: auto; color: #ddd; align-items: flex-end; padding-right: 2px; }
.notif { width: 15px; height: 14px; border: 1px solid #fff; margin: 0 5px 2px 6px; flex: none; }
.showdesk { width: 5px; height: 40px; margin-left: 17px; border-left: 1px solid #666; }

/* Symphony dimmed */
.sym { flex: 1; display: flex; min-height: 0; position: relative; background: #333; font-family: Lato, sans-serif; color: #1f1f1f; font-size: 13.500px; }
.snav { width: 249px; flex: none; display: flex; flex-direction: column; background: #060a12; color: #272b30; }
.profile { height: 75px; display: flex; padding: 11px 0 0 10px; flex: none; }
.p-av { width: 34px; height: 42px; border-radius: 50%; background: #0a0f17; margin-right: 9px; display: flex; align-items: center; justify-content: center; position: relative; flex: none; }
.p-note { width: 14px; height: 28px; color: #0d3a48; }
.p-dot { position: absolute; left: 24px; top: 29px; width: 8px; height: 9px; border-radius: 50%; background: #1d5f26; }
.p-txt { display: flex; flex-direction: column; }
.p-txt strong { font-weight: normal; color: #33373c; line-height: 20px; margin-top: -1px; font-size: 14px; }
.p-txt span { font-size: 12px; color: #1d2329; margin-top: 3px; line-height: 16px; }
.filter { margin: 0 15px 9px; height: 27px; background: #0a1019; display: flex; align-items: center; padding-left: 10px; color: #262c32; flex: none; font-weight: bold; font-size: 14px; }
.f-ic { width: 16px; height: 12px; margin-right: 11px; color: #2c2f33; }
.shead { height: 28px; background: #0b111b; display: flex; align-items: center; padding: 0 16px 0 12px; font-weight: bold; font-size: 12.500px; color: #272b30; justify-content: space-between; flex: none; }
.shead-app { height: 32px; }
.s-plus { width: 16px; height: 16px; color: #2a2e33; }
.slist { flex: none; }
.slist-grow { flex: 1; min-height: 0; overflow: hidden; }
.slist li { height: 30px; line-height: 30px; padding-left: 35px; white-space: nowrap; position: relative; width: 240px; overflow: hidden; background: #05080e; }
.away::before { content: ""; position: absolute; left: 16px; top: 11px; width: 8px; height: 9px; border-radius: 50%; background: #6a4a00; }
.smain { flex: 1; display: flex; flex-direction: column; min-width: 0; background: #333; }
.stop { height: 62px; display: flex; flex: none; }
.ssearch { width: 1104px; height: 39px; margin: 11px 0 0 48px; background: #363b38; display: flex; align-items: center; padding-left: 8px; color: #1d1f1f; font-size: 15px; flex: none; }
.ss-ic { width: 17px; height: 18px; margin-right: 23px; color: #141414; }
.snavs { display: flex; margin-left: 32px; padding-top: 7px; }
.sn { width: 78px; display: flex; flex-direction: column; align-items: center; font-size: 10.500px; color: #1c1f20; white-space: nowrap; position: relative; }
.sn-c { width: 34px; height: 34px; border-radius: 50%; background: #393e3c; display: flex; align-items: center; justify-content: center; margin-bottom: 3px; color: #141516; font-size: 18px; }
.sn-i { width: 18px; height: 18px; }
.sn-set::after { content: ""; position: absolute; left: 62px; top: 41px; border: 3.500px solid transparent; border-top: 4px solid #1c1f20; border-bottom: 0; }
.rhead { height: 88px; margin-left: 10px; padding: 15px 0 0 23px; width: 1653px; border-bottom: 1px solid #393939; flex: none; }
.rhead h1 { font-size: 25.500px; line-height: 40px; font-weight: 300; color: #191919; white-space: nowrap; }
.rhead p { font-size: 13.500px; line-height: 18px; display: flex; color: #1f1f1f; white-space: pre; }
.rhead p i { width: 1px; height: 18px; background: #222; margin: 0 1px; }
.rabout { height: 186px; flex: none; position: relative; }
.rabout h2 { font-size: 16px; text-align: center; color: #141414; line-height: 24px; margin-top: 23px; padding-left: 3px; font-weight: bold; }
.rabout p { text-align: right; margin-top: 57px; padding-right: 574px; line-height: 20px; color: #1f1f1f; font-size: 14px; }
.tline { margin-left: 33px; width: 1594px; flex: 1; min-height: 0; overflow: hidden; font-size: 13.500px; }
.tl-a { height: 62px; border-top: 1px solid #393939; border-bottom: 1px solid #393939; display: flex; flex-direction: column; position: relative; }
.tl-today { align-self: flex-end; margin: 5px 17px 0 0; color: #1c1c1c; display: flex; align-items: center; white-space: nowrap; }
.tl-today i { width: 7px; height: 7px; border-left: 2px solid #222; border-top: 2px solid #222; transform: rotate(45deg); margin: 3px 0 0 10px; }
.tl-created { display: flex; align-items: center; font-size: 12px; padding-left: 29px; margin-top: 7px; color: #232323; white-space: pre; }
.tl-av { width: 16px; height: 16px; border-radius: 50%; background: #3b3b3b; margin-right: 3px; display: flex; justify-content: center; }
.tl-note { width: 8px; height: 14px; color: #0e3a4a; }
.tl-b { height: 25px; border-bottom: 1px solid #393939; line-height: 25px; padding-left: 26px; font-size: 12px; color: #232323; white-space: pre; }
.who { color: #17304e; margin-right: 5px; font-weight: bold; }
.tl-created em, .tl-b em { font-style: italic; }
.msg { margin-top: 15px; }
.msg-first { margin-top: 11px; }
.mh { display: flex; align-items: center; height: 20px; }
.dot { width: 8px; height: 9px; border-radius: 50%; margin-right: 7px; margin-left: 2px; flex: none; }
.dot.on { background: #1b4f20; }
.dot.aw { background: #5a4000; }
.mh b { font-weight: bold; color: #151515; font-size: 14px; }
.mh b.me { color: #10293a; }
.mh time { font-size: 12px; margin-left: 9px; color: #232323; }
.msg p { line-height: 20px; color: #1f1f1f; white-space: pre; }
.msg p.m2 { margin-top: 7px; }
.msg p.at, .msg .at { color: #1c2f55; }
.sinput { height: 36px; flex: none; margin: 10px 31px 16px 32px; border: 1px solid #414141; border-radius: 2px; display: flex; align-items: center; padding: 0 10px 0 14px; color: #1f1f1f; font-size: 14px; }
.si-up { width: 7px; height: 7px; border-left: 1.500px solid #222; border-top: 1.500px solid #222; transform: rotate(45deg); margin-top: 4px; }
.si-t { margin-left: 14px; flex: 1; color: #232323; }
.si-i { width: 16px; height: 16px; margin-left: 10px; color: #161616; }
.si-sep { width: 1px; height: 22px; background: #3d3d3d; margin: 0 10px 0 9px; }
.si-n { width: 10px; height: 18px; color: #161616; margin-right: 2px; }
.fab { position: absolute; left: 227px; top: 12px; width: 40px; height: 40px; border-radius: 50%; background: #00446f; color: #3a6d8e; font-size: 28px; line-height: 38px; text-align: center; box-shadow: 0 2px 6px #0008; }
.nav-thumb { position: absolute; left: 241px; top: 111px; width: 5px; height: 73px; background: #0b0d12; border-radius: 3px; }
.main-thumb { position: absolute; left: 1903px; top: 387px; width: 5px; height: 531px; background: #1a1a1a; border-radius: 3px; }
.modal { position: absolute; left: 694px; top: 190px; width: 530px; height: 591px; background: #fff; border-radius: 2px; font-family: Lato, sans-serif; color: #333; font-size: 13.500px; }
.m-head { height: 57px; padding: 11px 9px 0 12px; display: flex; justify-content: space-between; line-height: 18px; }
.m-x { font-size: 16px; font-weight: bold; color: #222; }
.m-body { display: flex; height: 449px; padding: 0 12px; }
.m-av { width: 32px; height: 32px; border-radius: 50%; background: #e6e6e6; margin-right: 8px; display: flex; align-items: center; justify-content: center; flex: none; }
.m-note { width: 14px; height: 24px; color: #4db3e6; }
.editor { flex: 1; border: 1px solid #dcdcdc; display: flex; flex-direction: column; }
.e-tools { height: 21px; background: #fafafa; border-bottom: 1px solid #dcdcdc; display: flex; align-items: center; padding-left: 9px; color: #777; }
.e-i { width: 12px; height: 12px; margin-right: 12px; color: #777; }
.e-l { margin-right: 0; margin-left: 1px; }
.e-t { width: 12px; margin-right: 12px; text-align: center; font-family: "Liberation Sans", sans-serif; font-size: 12px; font-weight: bold; color: #777; }
i.e-t { font-style: italic; }
.e-ph { padding: 9px 10px; line-height: 18px; color: #a0a0a0; font-size: 14px; }
.m-foot { margin: 9px 8px 0; border-top: 1px solid #e4e4e4; padding: 24px 8px 0 0; display: flex; justify-content: flex-end; align-items: center; }
.m-cancel { color: #7a7f8a; font-size: 13px; margin-right: 21px; }
.m-post { width: 150px; height: 28px; background: #006cb0; border-radius: 14px; color: #fff; text-align: center; line-height: 28px; font-size: 13px; font-weight: bold; }
```
